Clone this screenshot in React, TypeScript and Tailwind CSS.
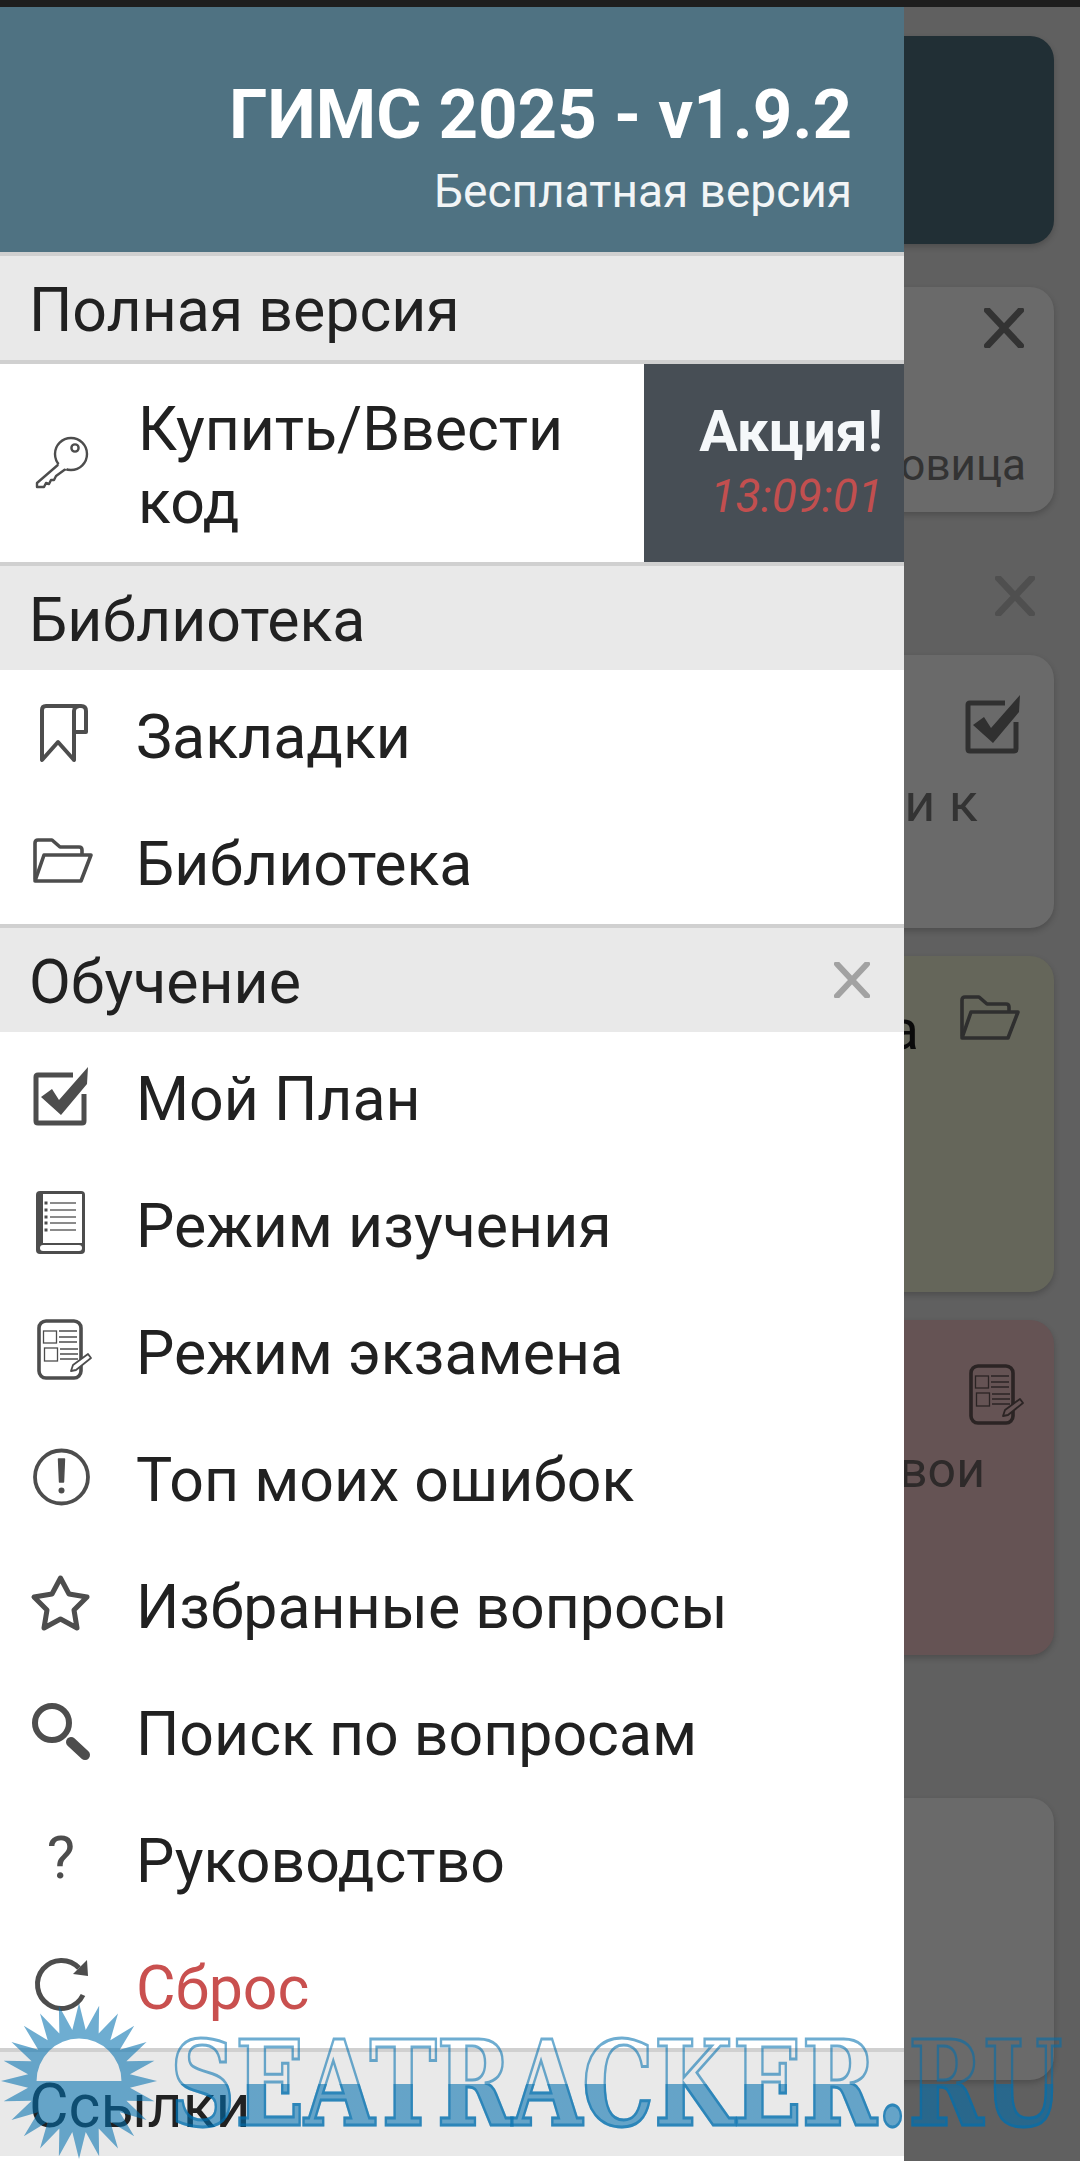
import React from "react";

const DARK = "#4d4d4d";

function KeyIcon({ c = DARK }: { c?: string }) {
  return (
    <svg viewBox="0 0 64 64" className="w-16 h-16 shrink-0" fill="none" stroke={c} strokeWidth="2.4" strokeLinejoin="round">
      <circle cx="42" cy="23" r="16" fill="#fff" />
      <path d="M30 33 L8 52 V56 H15 L17 52 L20 53 L22 49 L25 49 L27 45 L38 37" fill="#fff" />
      <path d="M30 33 L38 37" stroke="#fff" strokeWidth="3" />
      <circle cx="46" cy="17" r="3.6" />
    </svg>
  );
}
function BookmarkIcon({ c = DARK }: { c?: string }) {
  return (
    <svg viewBox="0 0 64 64" className="w-16 h-16 shrink-0" fill="none" stroke={c} strokeWidth="4" strokeLinejoin="round" strokeLinecap="round">
      <path d="M45 58 L29 40 L13 58 V8 Q13 4 17 4 H52 Q57 4 57 9 V30 H45 V9 Q45 5 50 4 M45 30 V58" />
    </svg>
  );
}
function FolderIcon({ c = DARK }: { c?: string }) {
  return (
    <svg viewBox="0 0 64 64" className="w-16 h-16 shrink-0" fill="none" stroke={c} strokeWidth="3.6" strokeLinejoin="round" strokeLinecap="round">
      <path d="M6 50 V14 Q6 11 9 11 H23 L31 18 H50 Q53 18 53 21 V25" />
      <path d="M6 52 L15 26 H62 L52 52 Z" />
    </svg>
  );
}
function CheckIcon({ c = DARK }: { c?: string }) {
  return (
    <svg viewBox="0 0 64 64" className="w-16 h-16 shrink-0" fill="none">
      <path d="M44 11 H9 Q7 11 7 13 V57 Q7 59 9 59 H53 Q55 59 55 57 V30" stroke={c} strokeWidth="5" />
      <path d="M12 33 L23 25 L30 36 L59 3 L58 20 L32 51 Z" fill={c} />
    </svg>
  );
}
function BookIcon({ c = DARK }: { c?: string }) {
  return (
    <svg viewBox="0 0 64 64" className="w-16 h-16 shrink-0">
      <rect x="7" y="0" width="49" height="63" rx="4" fill={c} />
      <rect x="14" y="3" width="39" height="49" fill="#fff" />
      <rect x="11" y="54" width="42" height="6" rx="3" fill="#fff" />
      {[12, 19, 26, 32, 39].map((y) => (
        <g key={y}>
          <rect x="15.5" y={y - 1.5} width="3" height="3" fill={c} />
          <path d={`M21 ${y} H47`} stroke={c} strokeWidth="1.3" />
        </g>
      ))}
    </svg>
  );
}
function ExamIcon({ c = DARK, bg = "#fff" }: { c?: string; bg?: string }) {
  return (
    <svg viewBox="0 0 64 64" className="w-16 h-16 shrink-0" fill="none" stroke={c}>
      <rect x="10" y="3" width="42" height="57" rx="7" strokeWidth="3.6" />
      <rect x="14.5" y="13" width="13" height="12" strokeWidth="1.3" />
      <rect x="15.5" y="30" width="13" height="13" strokeWidth="1.3" />
      <path d="M30 13 H48 M30 19 H48 M30 24 H48 M31 31 H49 M31 36 H49 M31 41 H49" strokeWidth="1.3" />
      <path d="M42 53 L44 47 L59 36 L62 40 L47 52 Z" fill={bg} strokeWidth="1.8" strokeLinejoin="round" />
    </svg>
  );
}
function AlertIcon() {
  return (
    <svg viewBox="0 0 64 64" className="w-16 h-16 shrink-0" fill="none" stroke={DARK}>
      <circle cx="32.5" cy="32" r="26.5" strokeWidth="3.8" />
      <path d="M29.5 14 H35.5 L34.5 37 H30.5 Z" fill={DARK} strokeWidth="1.4" strokeLinejoin="round" />
      <circle cx="32.5" cy="45.5" r="3" fill={DARK} stroke="none" />
    </svg>
  );
}
function StarIcon() {
  return (
    <svg viewBox="0 0 64 64" className="w-16 h-16 shrink-0" fill="none" stroke={DARK} strokeWidth="5" strokeLinejoin="round">
      <path d="M31.5 6 L40 22 L58 25 L45 38 L48 56 L31.5 47 L15 56 L18 38 L5 25 L23 22 Z" />
    </svg>
  );
}
function SearchIcon() {
  return (
    <svg viewBox="0 0 64 64" className="w-16 h-16 shrink-0" fill="none" stroke={DARK}>
      <circle cx="23" cy="24" r="17" strokeWidth="6" />
      <path d="M42 43 L56 56" strokeWidth="10" strokeLinecap="round" />
    </svg>
  );
}
function ResetIcon() {
  return (
    <svg viewBox="0 0 64 64" className="w-16 h-16 shrink-0" fill="none">
      <path d="M54 42 A24 24 0 1 1 50 15" stroke={DARK} strokeWidth="5" />
      <path d="M58 7 L59 23 L44 21 Z" fill={DARK} />
    </svg>
  );
}
function HelpIcon() {
  return (
    <div className="w-16 h-16 shrink-0 flex items-center justify-center text-[60px] leading-none text-[#4d4d4d]">?</div>
  );
}
function XIcon({ c, size, w = 5 }: { c: string; size: number; w?: number }) {
  return (
    <svg viewBox="0 0 36 36" width={size} height={size} fill="none" stroke={c} strokeWidth={w} strokeLinecap="round">
      <path d="M3 2 L33 34 M33 2 L3 34" />
    </svg>
  );
}

function Section({ title, border = true, children }: { title: string; border?: boolean; children?: React.ReactNode }) {
  return (
    <div className={`bg-[#e9e9e9] h-[104px] flex items-center justify-between pl-[29px] pr-[34px] text-[60.8px] leading-[70px] text-[#212121] ${border ? "border-t-[4px] border-[#d0d0d0] h-[108px]" : ""}`}>
      <span className="pt-[6px]">{title}</span>
      {children}
    </div>
  );
}

function Row({ icon, label, red }: { icon: React.ReactNode; label: string; red?: boolean }) {
  return (
    <div className="h-[127px] flex items-center pl-[29px] gap-[43px]">
      {icon}
      <span className={`text-[60.8px] leading-[70px] pt-[8px] ${red ? "text-[#c9504f]" : "text-[#212121]"}`}>{label}</span>
    </div>
  );
}

function sunPoints() {
  const n = 24;
  const pts: string[] = [];
  for (let i = 0; i < n * 2; i++) {
    const a = (Math.PI * i) / n - Math.PI / 2;
    const r = i % 2 === 0 ? 79 : 52;
    pts.push(`${(79 + r * Math.cos(a)).toFixed(1)} ${(79 + r * Math.sin(a)).toFixed(1)}`);
  }
  return "M" + pts.join(" L") + " Z";
}

function Watermark() {
  return (
    <>
      <svg viewBox="0 0 160 160" className="absolute left-0 top-[2003px] w-[160px] h-[158px]">
        <path
          d={sunPoints() + " M36 79 A43 43 0 0 1 122 79 Z"}
          fillRule="evenodd"
          fill="#006eae"
          fillOpacity="0.57"
        />
      </svg>
      <div className="absolute left-[170px] top-[2014px] h-[140px] flex items-center origin-left [transform:scaleX(0.773)]">
        <span className="whitespace-nowrap font-['DejaVu_Serif',serif] font-bold text-[117px] leading-[140px] text-transparent bg-clip-text bg-[linear-gradient(transparent_50%,rgba(0,110,174,0.57)_50%)] [-webkit-text-stroke:3px_rgba(0,110,174,0.57)]">
          SEATRACKER.RU
        </span>
      </div>
    </>
  );
}

function Card({ className, children }: { className: string; children?: React.ReactNode }) {
  return (
    <div className={`ml-[27px] mr-[26px] rounded-[24px] shadow-[0_3px_6px_rgba(0,0,0,0.2)] flex flex-col items-end ${className}`}>
      {children}
    </div>
  );
}

export default function App() {
  return (
    <div className="relative w-[1080px] h-[2161px] overflow-hidden bg-[#606060] font-['Roboto',sans-serif]">
      <div className="h-[7px] bg-[#1e1e1e]" />
      <div>
        <Card className="mt-[29px] h-[208px] bg-[#212f35]" />
        <Card className="mt-[43px] h-[225px] bg-[#6a6a6a] px-[10px]">
          <div className="pt-[21px] pr-[20px]"><XIcon c="#333333" size={40} w={6} /></div>
          <div className="mt-[84px] pr-[18px] text-[44px] text-[#333333]">Пословица</div>
        </Card>
        <div className="h-[143px] flex items-center justify-end pr-[45px]">
          <div className="pt-[24px]"><XIcon c="#4f4f4f" size={40} w={6} /></div>
        </div>
        <Card className="h-[273px] bg-[#6a6a6a]">
          <div className="pt-[37px] pr-[29px]"><CheckIcon c="#303030" /></div>
          <div className="pr-[76px] text-[54px] text-[#333333] mt-[6px]">и к</div>
        </Card>
        <Card className="mt-[28px] h-[336px] bg-[#65665a]">
          <div className="w-full flex justify-end items-start pt-[30px] pr-[34px]">
            <span className="text-[56px] text-[#0a0a0a] mt-[2px] mr-[37px]">а</span>
            <FolderIcon c="#2f2f2f" />
          </div>
        </Card>
        <Card className="mt-[28px] h-[335px] bg-[#655354]">
          <div className="pt-[43px] pr-[29px]"><ExamIcon c="#2b2424" bg="#655354" /></div>
          <div className="pr-[69px] mt-[6px] text-[50px] text-[#2e2a2a]">свои</div>
        </Card>
        <Card className="mt-[143px] h-[282px] bg-[#6a6a6a]" />
      </div>

      <aside className="absolute left-0 top-[7px] w-[904px] h-[2154px] bg-white">
        <div className="h-[245px] bg-[#4f7282] flex flex-col items-end pr-[52px] text-white">
          <div className="mt-[63px] text-[69px] font-bold leading-[90px]">ГИМС 2025 - v1.9.2</div>
          <div className="text-[46px] leading-[62px] text-[#f2f5f6]">Бесплатная версия</div>
        </div>
        <Section title="Полная версия" />
        <div className="border-t-[4px] border-[#d0d0d0] h-[202px] flex">
          <div className="flex-1 flex items-center pl-[29px] gap-[45px]">
            <KeyIcon />
            <span className="text-[60.8px] leading-[73px] text-[#212121] pt-[5px]">Купить/Ввести<br />код</span>
          </div>
          <div className="w-[260px] bg-[#474e55] flex flex-col items-end justify-center pr-[21px] pb-[2px]">
            <div className="text-[57px] font-bold text-[#f5f8fa] leading-[68px]">Акция!</div>
            <div className="text-[46px] italic text-[#c24f4f] leading-[60px]">13:09:01</div>
          </div>
        </div>
        <Section title="Библиотека" />
        <Row icon={<BookmarkIcon />} label="Закладки" />
        <Row icon={<FolderIcon />} label="Библиотека" />
        <Section title="Обучение">
          <XIcon c="#a2a2a2" size={36} w={6} />
        </Section>
        <Row icon={<CheckIcon />} label="Мой План" />
        <Row icon={<BookIcon />} label="Режим изучения" />
        <Row icon={<ExamIcon />} label="Режим экзамена" />
        <Row icon={<AlertIcon />} label="Топ моих ошибок" />
        <Row icon={<StarIcon />} label="Избранные вопросы" />
        <Row icon={<SearchIcon />} label="Поиск по вопросам" />
        <Row icon={<HelpIcon />} label="Руководство" />
        <Row icon={<ResetIcon />} label="Сброс" red />
        <Section title="Ссылки" />
      </aside>

      <Watermark />
    </div>
  );
}
